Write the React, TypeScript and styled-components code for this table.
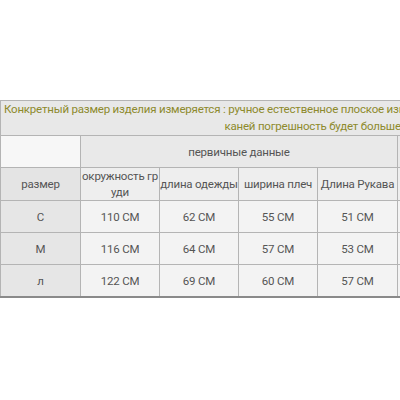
import React from 'react';
import styled, { createGlobalStyle } from 'styled-components';

const GlobalStyle = createGlobalStyle`
  html, body {
    margin: 0;
    padding: 0;
    background: #ffffff;
    overflow: hidden;
  }
`;

const Page = styled.div`
  width: 400px;
  height: 400px;
  overflow: hidden;
  padding-top: 100px;
  box-sizing: border-box;
  font-family: Roboto, "Noto Sans", sans-serif;
`;

const Table = styled.table`
  border-collapse: collapse;
  table-layout: fixed;
  width: 627px;
  border-top: 1px solid #9a9a9a;
  border-bottom: 2px solid #8a8a8a;
  color: #555555;
  font-size: 11.5px;
  letter-spacing: -0.2px;
`;

const TitleCell = styled.td`
  height: 33px;
  padding: 0 3px;
  background: #e8e8e8;
  border: 1px solid #b4b4b4;
  color: #8d8a2c;
  text-align: center;
  line-height: 17px;
`;

const TitleLine = styled.div<{ $left?: boolean }>`
  white-space: nowrap;
  text-align: ${p => (p.$left ? 'left' : 'center')};
`;

const Cell = styled.td<{ $bg: string; $h?: number }>`
  height: ${p => p.$h ?? 31}px;
  padding: 0;
  background: ${p => p.$bg};
  border: 1px solid #b4b4b4;
  text-align: center;
  line-height: 16px;
  white-space: nowrap;
  overflow: hidden;
`;

const rows = [
  { size: 'C', values: ['110 CM', '62 CM', '55 CM', '51 CM'] },
  { size: 'M', values: ['116 CM', '64 CM', '57 CM', '53 CM'] },
  { size: 'л', values: ['122 CM', '69 CM', '60 CM', '57 CM'] },
];

const widths = [80, 79, 79, 79, 80, 115, 115];

export default function App() {
  return (
    <>
      <GlobalStyle />
      <Page>
        <Table>
          <colgroup>
            {widths.map((w, i) => (
              <col key={i} style={{ width: w }} />
            ))}
          </colgroup>
          <tbody>
            <tr>
              <TitleCell colSpan={7}>
                <TitleLine $left>
                  Конкретный размер изделия измеряется : ручное естественное плоское измерение, из-за разных т
                </TitleLine>
                <TitleLine>каней погрешность будет больше.</TitleLine>
              </TitleCell>
            </tr>
            <tr>
              <Cell $bg="#f7f7f7" />
              <Cell $bg="#e9e9e9" colSpan={4}>первичные данные</Cell>
              <Cell $bg="#e9e9e9" colSpan={2} />
            </tr>
            <tr>
              <Cell $bg="#e4e4e4" $h={32}>размер</Cell>
              <Cell $bg="#eeeeee" $h={32}>
                окружность гр
                <br />
                уди
              </Cell>
              <Cell $bg="#eeeeee" $h={32}>длина одежды</Cell>
              <Cell $bg="#eeeeee" $h={32}>ширина плеч</Cell>
              <Cell $bg="#eeeeee" $h={32}>Длина Рукава</Cell>
              <Cell $bg="#eeeeee" $h={32} colSpan={2} />
            </tr>
            {rows.map(r => (
              <tr key={r.size}>
                <Cell $bg="#e6e6e6">{r.size}</Cell>
                {r.values.map((v, i) => (
                  <Cell key={i} $bg="#f3f3f3">{v}</Cell>
                ))}
                <Cell $bg="#f3f3f3" colSpan={2} />
              </tr>
            ))}
          </tbody>
        </Table>
      </Page>
    </>
  );
}
